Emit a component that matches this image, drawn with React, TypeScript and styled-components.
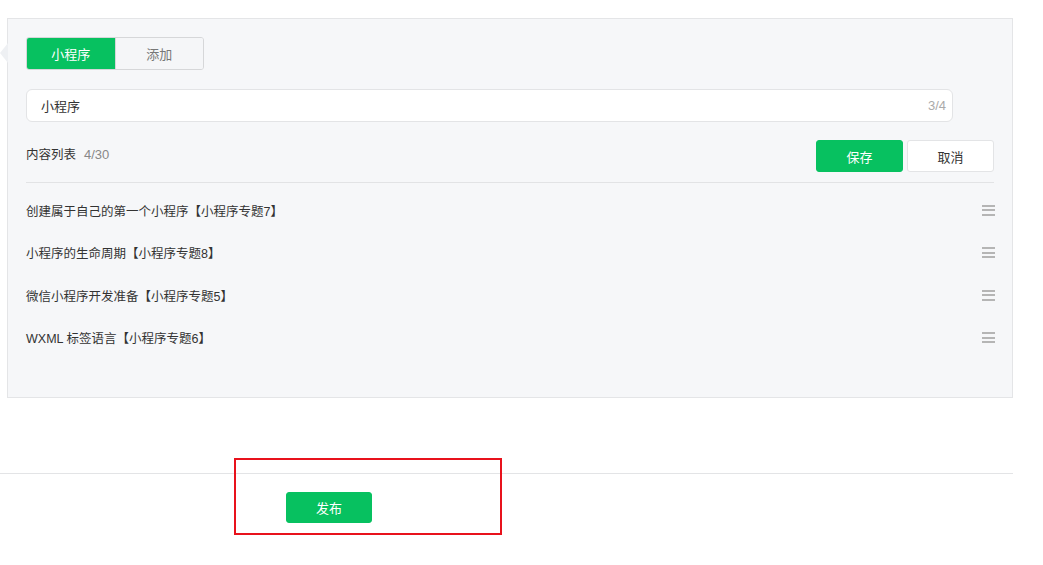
import React, { useState } from 'react'
import styled, { createGlobalStyle } from 'styled-components'

const GREEN = '#07c160'

const GlobalStyle = createGlobalStyle`
  html, body {
    margin: 0;
    padding: 0;
    background: #fff;
    font-family: "Liberation Sans", "Noto Sans CJK SC", sans-serif;
    color: #333;
  }
`

const Page = styled.div`
  width: 1043px;
  height: 565px;
  position: relative;
  overflow: hidden;
`

const Panel = styled.div`
  position: relative;
  margin: 18px 0 0 7px;
  width: 1006px;
  height: 380px;
  box-sizing: border-box;
  background: #f6f7f9;
  border: 1px solid #e4e5e7;
  padding: 18px 19px 0 18px;

  &::before {
    content: '';
    position: absolute;
    left: -8px;
    top: 24px;
    border-style: solid;
    border-width: 10px 8px 10px 0;
    border-color: transparent #eef0f3 transparent transparent;
  }
`

const Tabs = styled.div`
  display: flex;
  width: 178px;
  height: 33px;
  border: 1px solid #d6d7d9;
  border-radius: 3px;
  box-sizing: border-box;
  overflow: hidden;
  background: #f6f7f9;
`

const Tab = styled.button<{ $active?: boolean }>`
  flex: 1;
  border: none;
  margin: 0;
  padding: 0;
  font-family: inherit;
  font-size: 13px;
  cursor: pointer;
  background: ${(p) => (p.$active ? GREEN : '#f5f6f8')};
  color: ${(p) => (p.$active ? '#fff' : '#777')};
  border-left: ${(p) => (p.$active ? 'none' : '1px solid #d6d7d9')};
`

const InputBox = styled.div`
  margin-top: 19px;
  width: 927px;
  height: 33px;
  box-sizing: border-box;
  display: flex;
  align-items: center;
  background: #fff;
  border: 1px solid #e3e4e6;
  border-radius: 6px;
  padding: 0 6px 0 14px;
`

const Input = styled.input`
  flex: 1;
  border: none;
  outline: none;
  background: transparent;
  font-family: inherit;
  font-size: 13px;
  color: #333;
  padding: 0;
`

const Counter = styled.span`
  font-size: 13px;
  color: #aaa;
`

const ListHeader = styled.div`
  margin-top: 18px;
  display: flex;
  align-items: center;
  justify-content: space-between;
  padding-bottom: 10px;
  border-bottom: 1px solid #e2e3e5;
  width: 968px;
`

const Title = styled.div`
  font-size: 12.5px;
  color: #333;
  margin-bottom: 6px;

  span {
    color: #888;
    font-size: 13px;
    margin-left: 8px;
  }
`

const Actions = styled.div`
  display: flex;
  gap: 4px;
`

const Btn = styled.button<{ $primary?: boolean }>`
  width: 87px;
  height: 32px;
  border-radius: 3px;
  font-family: inherit;
  font-size: 13px;
  cursor: pointer;
  box-sizing: border-box;
  border: 1px solid ${(p) => (p.$primary ? GREEN : '#e3e4e6')};
  background: ${(p) => (p.$primary ? GREEN : '#fff')};
  color: ${(p) => (p.$primary ? '#fff' : '#333')};
`

const List = styled.ul`
  list-style: none;
  margin: 0;
  padding: 6px 0 0;
  width: 968px;
`

const Item = styled.li`
  height: 42.5px;
  display: flex;
  align-items: center;
  justify-content: space-between;
  font-size: 12.5px;
  color: #333;
`

const Handle = styled.span`
  display: flex;
  flex-direction: column;
  gap: 2.5px;
  width: 13px;
  margin-right: -1px;

  i {
    display: block;
    height: 2px;
    background: #b5b5b5;
  }
`

const Footer = styled.div`
  margin-top: 75px;
  width: 1013px;
  border-top: 1px solid #e3e4e6;
  padding: 18px 0 0 286px;
  box-sizing: border-box;
`

const Publish = styled(Btn)`
  width: 86px;
  height: 31px;
`

const Annotation = styled.div`
  position: absolute;
  left: 234px;
  top: 458px;
  width: 268px;
  height: 77px;
  box-sizing: border-box;
  border: 2px solid #e8121c;
  pointer-events: none;
`

const items = [
  '创建属于自己的第一个小程序【小程序专题7】',
  '小程序的生命周期【小程序专题8】',
  '微信小程序开发准备【小程序专题5】',
  'WXML 标签语言【小程序专题6】',
]

export default function App() {
  const [name, setName] = useState('小程序')
  const [tab, setTab] = useState(0)

  return (
    <Page>
      <GlobalStyle />
      <Panel>
        <Tabs>
          <Tab $active={tab === 0} onClick={() => setTab(0)}>
            小程序
          </Tab>
          <Tab $active={tab === 1} onClick={() => setTab(1)}>
            添加
          </Tab>
        </Tabs>
        <InputBox>
          <Input value={name} maxLength={4} onChange={(e) => setName(e.target.value)} />
          <Counter>{name.length}/4</Counter>
        </InputBox>
        <ListHeader>
          <Title>
            内容列表<span>4/30</span>
          </Title>
          <Actions>
            <Btn $primary>保存</Btn>
            <Btn>取消</Btn>
          </Actions>
        </ListHeader>
        <List>
          {items.map((t) => (
            <Item key={t}>
              {t}
              <Handle>
                <i />
                <i />
                <i />
              </Handle>
            </Item>
          ))}
        </List>
      </Panel>
      <Footer>
        <Publish $primary>发布</Publish>
      </Footer>
      <Annotation />
    </Page>
  )
}
